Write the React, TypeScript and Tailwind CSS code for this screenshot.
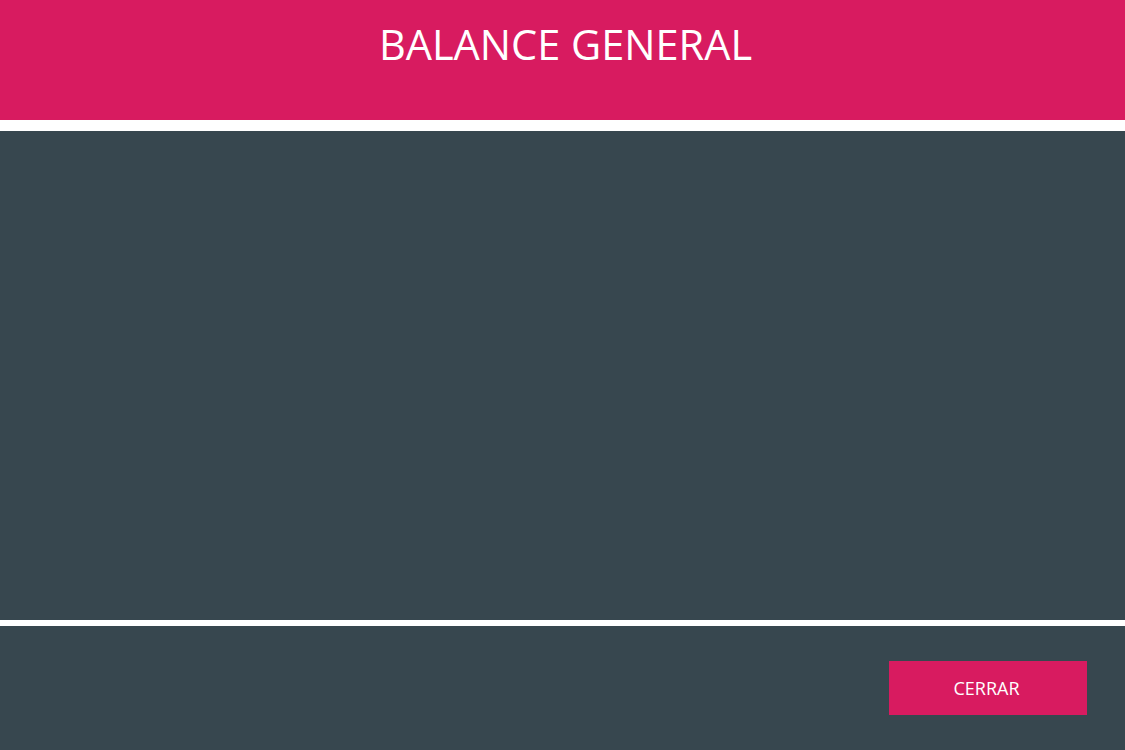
import React from "react";

export default function App() {
  return (
    <div
      className="w-[1125px] h-[750px] flex flex-col bg-white overflow-hidden"
      style={{ fontFamily: '"Open Sans", "Liberation Sans", sans-serif' }}
    >
      <header className="h-[120px] bg-[#d81b60] flex justify-center pl-[6px]">
        <h1 className="mt-[16px] text-[41.5px] leading-[56px] text-white font-normal">
          BALANCE GENERAL
        </h1>
      </header>

      <main className="mt-[11px] h-[489px] bg-[#37474f]" />

      <footer className="mt-[6px] flex-1 bg-[#37474f] flex items-start justify-end pt-[35px] pr-[38px]">
        <button className="w-[198px] h-[54px] bg-[#d81b60] text-white text-[18px] flex items-center justify-center pr-[3px]">
          CERRAR
        </button>
      </footer>
    </div>
  );
}
